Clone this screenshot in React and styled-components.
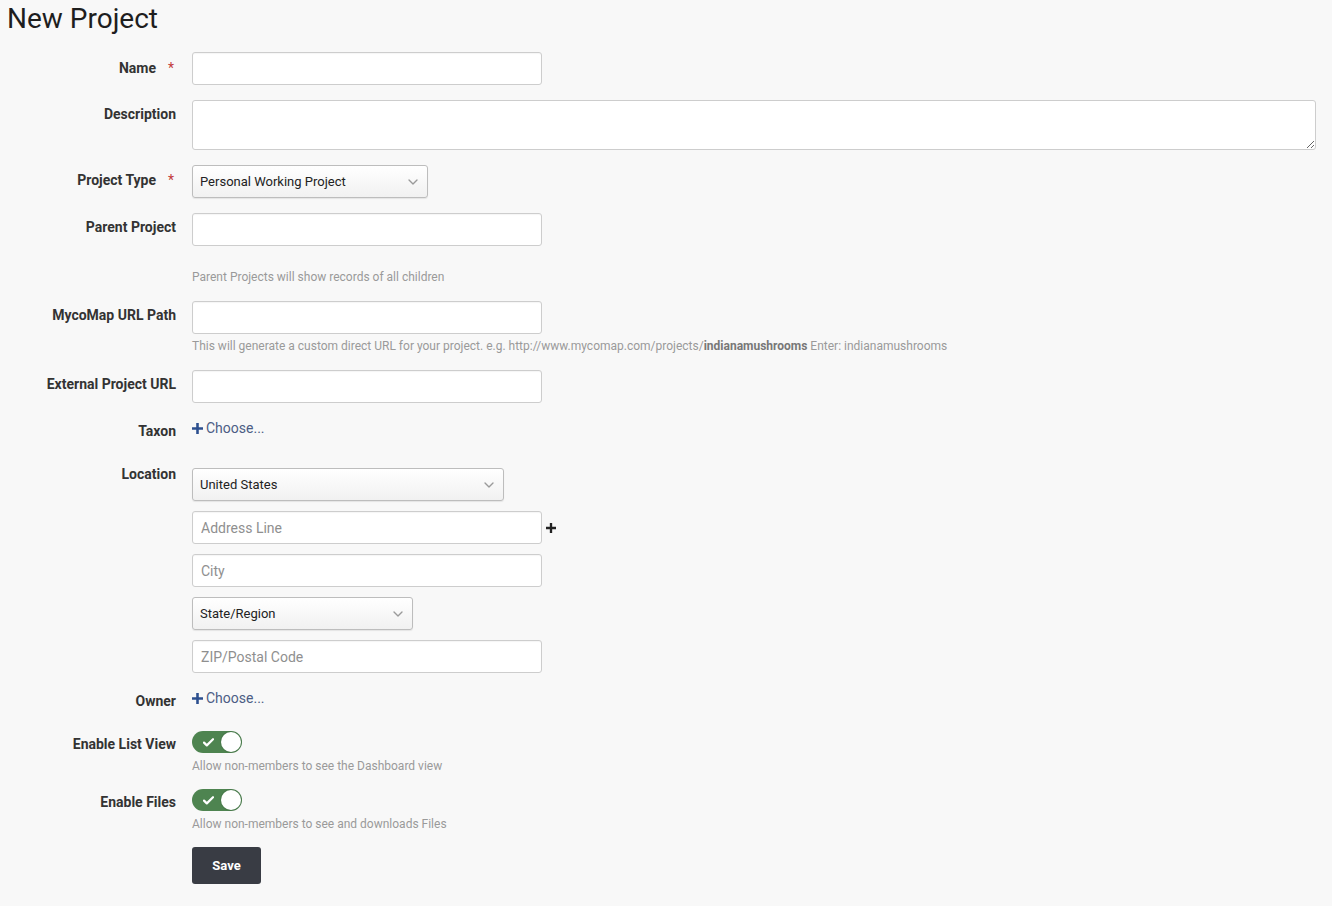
import React from "react";
import styled, { createGlobalStyle } from "styled-components";
import { ChevronDown } from "lucide-react";

const GlobalStyle = createGlobalStyle`
  html, body {
    margin: 0;
    padding: 0;
    background: #f8f8f8;
    font-family: Roboto, "Liberation Sans", sans-serif;
    color: #333;
  }
  * {
    box-sizing: border-box;
  }
`;

const Page = styled.div`
  padding: 0 16px 20px 7px;
  min-height: 906px;
`;

const Title = styled.h1`
  margin: 0;
  padding-top: 2px;
  font-size: 28px;
  line-height: 33px;
  font-weight: 400;
  color: #1e1e1e;
  margin-bottom: 17px;
`;

const Form = styled.form`
  display: flex;
  flex-direction: column;
  gap: 15px;
`;

const Row = styled.div`
  display: grid;
  grid-template-columns: 169px 1fr;
  column-gap: 16px;
  min-height: ${({ $minHeight }) => ($minHeight ? `${$minHeight}px` : "auto")};
`;

const Label = styled.label`
  display: flex;
  justify-content: flex-end;
  font-size: 14px;
  font-weight: 700;
  line-height: 20px;
  padding-top: ${({ $top }) => ($top !== undefined ? $top : 4)}px;
  color: #333;
  white-space: nowrap;
`;

const Required = styled.span`
  color: #c23b3b;
  font-weight: 400;
  margin-left: 12px;
  width: 8px;
  font-size: 14px;
`;

const Field = styled.div`
  display: flex;
  flex-direction: column;
  align-items: flex-start;
  gap: ${({ $gap }) => ($gap ? `${$gap}px` : "0")};
  padding-top: ${({ $top }) => ($top ? `${$top}px` : "0")};
`;

const Input = styled.input`
  width: ${({ $width }) => ($width ? `${$width}px` : "350px")};
  height: 33px;
  border: 1px solid #cdcdcd;
  border-radius: 3px;
  background: #fff;
  padding: 0 8px;
  font-family: Roboto, "Liberation Sans", sans-serif;
  font-size: 14px;
  color: #333;
  box-shadow: inset 0 1px 1px rgba(0, 0, 0, 0.04);
  outline: none;
  &::placeholder {
    color: #8f8f8f;
  }
`;

const TextArea = styled.textarea`
  width: 100%;
  height: 50px;
  border: 1px solid #cdcdcd;
  border-radius: 3px;
  background: #fff;
  padding: 6px 8px;
  font-family: Roboto, "Liberation Sans", sans-serif;
  font-size: 14px;
  display: block;
  outline: none;
`;

const SelectWrap = styled.div`
  position: relative;
  width: ${({ $width }) => $width}px;
  height: 33px;
`;

const Select = styled.select`
  appearance: none;
  -webkit-appearance: none;
  width: 100%;
  height: 100%;
  border: 1px solid #bdbdbd;
  border-radius: 3px;
  background: linear-gradient(#ffffff, #f1f1f1);
  padding: 0 28px 0 7px;
  font-family: Roboto, "Liberation Sans", sans-serif;
  font-size: 13px;
  color: #222;
  box-shadow: 0 1px 1px rgba(0, 0, 0, 0.08);
  outline: none;
`;

const Chevron = styled(ChevronDown)`
  position: absolute;
  right: 7px;
  top: 9px;
  color: #9a9a9a;
  pointer-events: none;
`;

const Help = styled.div`
  font-size: 12px;
  line-height: ${({ $lh }) => ($lh ? `${$lh}px` : "17px")};
  color: #9a9a9a;
  margin-top: ${({ $top }) => ($top ? `${$top}px` : "3px")};
  white-space: nowrap;
  b {
    color: #777;
    font-weight: 700;
  }
`;

const ChooseLink = styled.a`
  display: inline-flex;
  align-items: center;
  gap: 3px;
  font-size: 14px;
  line-height: 20px;
  color: #4c5d85;
  text-decoration: none;
  cursor: pointer;
`;

const PlusIcon = ({ color = "#2c4f8f", size = 11 }) => (
  <svg width={size} height={size} viewBox="0 0 12 12">
    <path d="M4.6 0h2.8v4.6H12v2.8H7.4V12H4.6V7.4H0V4.6h4.6z" fill={color} />
  </svg>
);

const AddressLine = styled.div`
  display: flex;
  align-items: center;
  gap: 4px;
`;

const Toggle = styled.div`
  position: relative;
  width: 50px;
  height: 22px;
  border-radius: 11px;
  background: ${({ $on }) => ($on ? "#4e8450" : "#ccc")};
  display: flex;
  align-items: center;
  padding-left: 11px;
`;

const Knob = styled.span`
  position: absolute;
  right: 1px;
  top: 1px;
  width: 20px;
  height: 20px;
  border-radius: 50%;
  background: #fff;
  box-shadow: 0 0 0 1px rgba(0, 0, 0, 0.08);
`;

const CheckIcon = () => (
  <svg width="11" height="9" viewBox="0 0 11 9">
    <path d="M1 4.6l2.8 2.8L10 1.2" stroke="#fff" strokeWidth="2.2" fill="none" strokeLinecap="round" strokeLinejoin="round" />
  </svg>
);

const SaveButton = styled.button`
  width: 69px;
  height: 37px;
  border: none;
  border-radius: 3px;
  background: #393c44;
  color: #fff;
  font-family: Roboto, "Liberation Sans", sans-serif;
  font-size: 13px;
  font-weight: 700;
  cursor: pointer;
`;

const App = () => {
  return (
    <Page>
      <GlobalStyle />
      <Title>New Project</Title>
      <Form onSubmit={(e) => e.preventDefault()}>
        <Row>
          <Label $top={6}>
            Name<Required>*</Required>
          </Label>
          <Field>
            <Input />
          </Field>
        </Row>

        <Row>
          <Label>Description</Label>
          <Field>
            <TextArea />
          </Field>
        </Row>

        <Row>
          <Label $top={5}>
            Project Type<Required>*</Required>
          </Label>
          <Field>
            <SelectWrap $width={236}>
              <Select defaultValue="personal">
                <option value="personal">Personal Working Project</option>
              </Select>
              <Chevron size={16} strokeWidth={2} />
            </SelectWrap>
          </Field>
        </Row>

        <Row>
          <Label>Parent Project</Label>
          <Field>
            <Input />
            <Help $top={23}>Parent Projects will show records of all children</Help>
          </Field>
        </Row>

        <Row>
          <Label>MycoMap URL Path</Label>
          <Field>
            <Input />
            <Help $top={4}>
              This will generate a custom direct URL for your project. e.g.
              http://www.mycomap.com/projects/<b>indianamushrooms</b> Enter:
              indianamushrooms
            </Help>
          </Field>
        </Row>

        <Row>
          <Label>External Project URL</Label>
          <Field>
            <Input />
          </Field>
        </Row>

        <Row $minHeight={28}>
          <Label $top={3}>Taxon</Label>
          <Field>
            <ChooseLink>
              <PlusIcon />
              Choose...
            </ChooseLink>
          </Field>
        </Row>

        <Row>
          <Label $top={3}>Location</Label>
          <Field $gap={10} $top={7}>
            <SelectWrap $width={312}>
              <Select defaultValue="us">
                <option value="us">United States</option>
              </Select>
              <Chevron size={16} strokeWidth={2} />
            </SelectWrap>
            <AddressLine>
              <Input placeholder="Address Line" />
              <PlusIcon color="#222" size={10} />
            </AddressLine>
            <Input placeholder="City" />
            <SelectWrap $width={221}>
              <Select defaultValue="">
                <option value="">State/Region</option>
              </Select>
              <Chevron size={16} strokeWidth={2} />
            </SelectWrap>
            <Input placeholder="ZIP/Postal Code" />
          </Field>
        </Row>

        <Row $minHeight={28}>
          <Label $top={3}>Owner</Label>
          <Field>
            <ChooseLink>
              <PlusIcon />
              Choose...
            </ChooseLink>
          </Field>
        </Row>

        <Row>
          <Label $top={3}>Enable List View</Label>
          <Field>
            <Toggle $on>
              <CheckIcon />
              <Knob />
            </Toggle>
            <Help $top={5} $lh={16}>Allow non-members to see the Dashboard view</Help>
          </Field>
        </Row>

        <Row>
          <Label $top={3}>Enable Files</Label>
          <Field>
            <Toggle $on>
              <CheckIcon />
              <Knob />
            </Toggle>
            <Help $top={5} $lh={16}>Allow non-members to see and downloads Files</Help>
          </Field>
        </Row>

        <Row>
          <span />
          <Field>
            <SaveButton type="submit">Save</SaveButton>
          </Field>
        </Row>
      </Form>
    </Page>
  );
};

export default App;
